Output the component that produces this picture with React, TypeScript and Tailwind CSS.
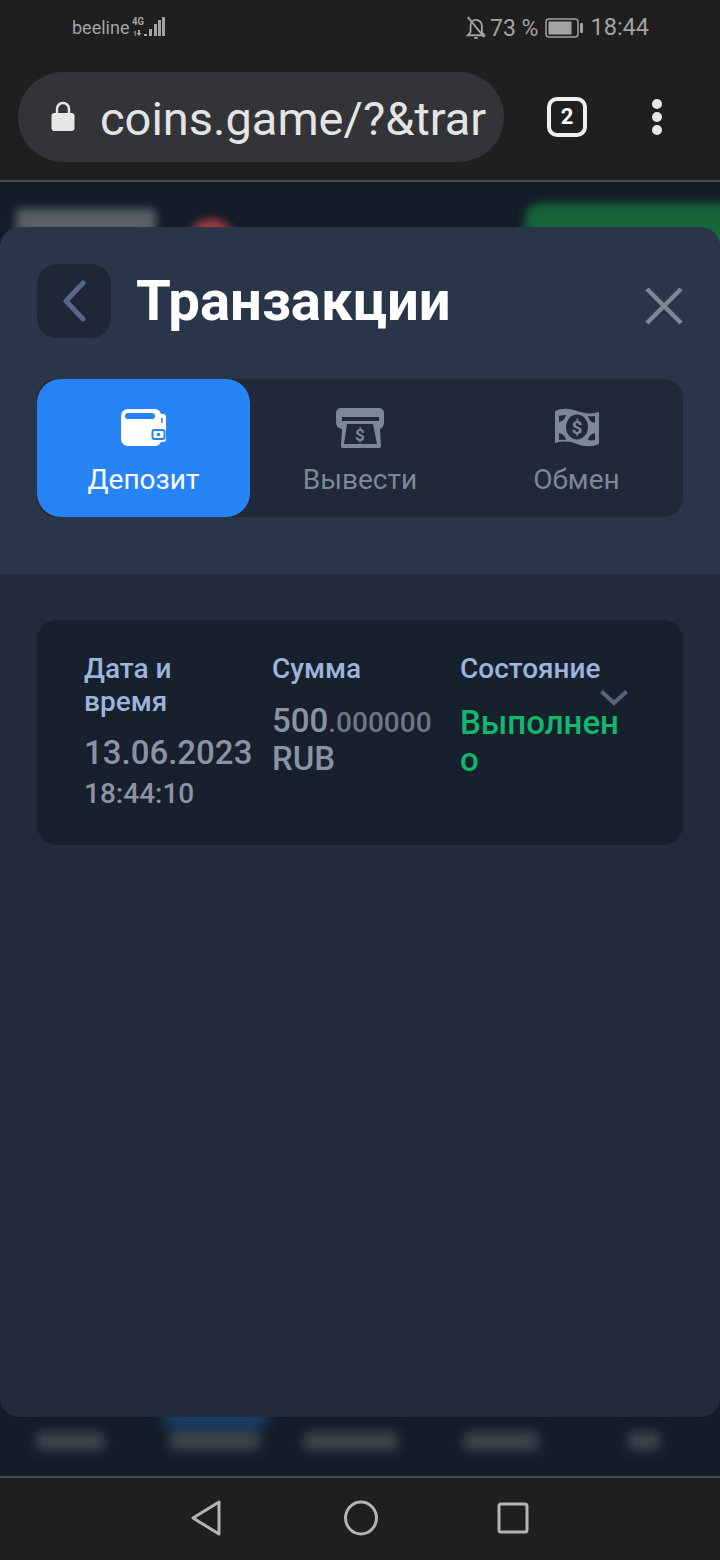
const SignalIcon = () => (
  <svg width="36" height="24" viewBox="0 0 36 24" className="text-[#a3a3a3]" fill="currentColor">
    <text x="0" y="9" fontSize="10" fontWeight="700" textLength="12" lengthAdjust="spacingAndGlyphs" fontFamily="Roboto, sans-serif">4G</text>
    <text x="1" y="20" fontSize="7" fontWeight="700" fontFamily="Roboto, sans-serif">1</text>
    <path d="M6 14h2v3h1.500L7 20l-2.500-3H6z" />
    <rect x="12" y="18" width="3" height="2" />
    <rect x="17" y="13" width="3" height="7" />
    <rect x="22" y="8" width="3" height="12" />
    <rect x="26" y="4" width="3" height="16" />
    <rect x="30" y="1" width="3" height="19" />
  </svg>
);

const BellOffIcon = () => (
  <svg width="20" height="24" viewBox="0 0 22 26" fill="none" stroke="#a3a3a3" strokeWidth="2">
    <path d="M2 21h18l-2.500-3.500V11c0-4-2.800-7-6.500-7S5 7 5 11v6.500L2 21z" />
    <path d="M9 24h4" />
    <path d="M2 1l18 22" />
  </svg>
);

const BatteryIcon = () => (
  <svg width="38" height="20" viewBox="0 0 38 20">
    <rect x="1" y="1" width="32" height="18" rx="3" fill="none" stroke="#a3a3a3" strokeWidth="1.500" />
    <rect x="3.500" y="3.500" width="23" height="13" fill="#a3a3a3" />
    <rect x="35" y="5" width="3" height="10" rx="1" fill="#a3a3a3" />
  </svg>
);

const LockIcon = () => (
  <svg width="26" height="32" viewBox="0 0 26 32">
    <path d="M7 14V8a6 6 0 0 1 12 0v6" fill="none" stroke="#e6e6e6" strokeWidth="2.500" />
    <rect x="1.500" y="12" width="23" height="18" rx="3" fill="#e6e6e6" />
  </svg>
);

const WalletIcon = () => (
  <svg width="46" height="38" viewBox="0 0 46 38">
    <path d="M7 0h26a7 7 0 0 1 7 5h2a3 3 0 0 1 3 3v22a3 3 0 0 1-3 3h-2a7 7 0 0 1-6 4H7a7 7 0 0 1-7-7V7a7 7 0 0 1 7-7z" fill="#fff" />
    <rect x="4" y="4" width="30" height="6" rx="3" fill="#2684f7" />
    <path d="M41 9v5" stroke="#2684f7" strokeWidth="1.500" />
    <rect x="31.500" y="21" width="12" height="9" rx="2" fill="#fff" stroke="#2684f7" strokeWidth="2" />
    <circle cx="37.500" cy="25.500" r="1.800" fill="#2684f7" />
  </svg>
);

const WithdrawIcon = () => (
  <svg width="50" height="40" viewBox="0 0 50 40">
    <path d="M6 0h38a5 5 0 0 1 5 5v10a7 7 0 0 1-4 6l1 17a2 2 0 0 1-2 2H8a2 2 0 0 1-2-2l1-17a7 7 0 0 1-6-6V5a5 5 0 0 1 5-5z" fill="#7d8896" />
    <rect x="7" y="9" width="37" height="4" fill="#1f2937" />
    <path d="M12 16h26l4 20H9z" fill="#1f2937" />
    <text x="25" y="33" textAnchor="middle" fontSize="17" fontWeight="700" fill="#7d8896" fontFamily="Roboto, sans-serif">$</text>
  </svg>
);

const CashIcon = () => (
  <svg width="46" height="40" viewBox="0 0 46 40">
    <path d="M1 3c6-3 14-3 22 0s15 3 22 1v32c-7 3-14 3-22 0s-15-3-22-1z" fill="#7d8896" />
    <ellipse cx="23" cy="19" rx="11" ry="12.500" fill="#1f2937" />
    <text x="23" y="26" textAnchor="middle" fontSize="19" fontWeight="700" fill="#7d8896" fontFamily="Roboto, sans-serif">$</text>
    <path d="M5 8c3-1 5-1 7-1-1 4-3 6-7 7zM41 8c-3 .5-5 .5-7 0 1 4 3 6 7 7zM5 25c4 1 6 3 7 7-2-.5-4-.5-7 0zM41 25c-4 1-6 3-7 7 2 .5 4 .5 7 0z" fill="#1f2937" />
  </svg>
);

export default function App() {
  return (
    <div className="w-[720px] h-[1560px] flex flex-col bg-[#1f1f1f] overflow-hidden font-['Roboto',sans-serif]">
      {/* status bar */}
      <div className="h-[58px] pb-[2px] flex items-center justify-between pl-[72px] pr-[71px] text-[#a3a3a3] shrink-0">
        <div className="flex items-center gap-[3px]">
          <span className="text-[18px] leading-none">beeline</span>
          <SignalIcon />
        </div>
        <div className="flex items-center text-[23.500px] leading-none">
          <BellOffIcon />
          <span className="ml-[4px] text-[23px]">73 %</span>
          <span className="mx-[7px]">
            <BatteryIcon />
          </span>
          <span>18:44</span>
        </div>
      </div>

      {/* browser bar */}
      <div className="h-[124px] flex items-start pl-[18px] shrink-0 border-b-2 border-[#4a4a4a]">
        <div className="mt-[14px] w-[486px] h-[90px] rounded-[45px] bg-[#333438] flex items-center pl-[32px] overflow-hidden">
          <LockIcon />
          <span className="ml-[24px] pt-[3px] text-[47px] leading-none text-[#e4e4e4] whitespace-nowrap">coins.game/?&amp;trar</span>
        </div>
        <div className="mt-[39px] ml-[43px] w-[40px] h-[40px] rounded-[10px] border-[4px] border-[#efefef] flex items-center justify-center text-[22px] font-bold text-white leading-none">2</div>
        <div className="mt-[41px] ml-[65px] flex flex-col gap-[3px]">
          <span className="w-[10px] h-[10px] rounded-full bg-[#e6e6e6]" />
          <span className="w-[10px] h-[10px] rounded-full bg-[#e6e6e6]" />
          <span className="w-[10px] h-[10px] rounded-full bg-[#e6e6e6]" />
        </div>
      </div>

      {/* page behind the modal */}
      <div className="relative flex-1 bg-[#131c28] overflow-hidden flex flex-col justify-between">
        <div className="flex items-start pt-[27px] pl-[16px] blur-[5px]">
          <div className="w-[140px] h-[26px] bg-[#5b6068] rounded-[4px]" />
          <div className="ml-[32px] mt-[10px] w-[46px] h-[46px] rounded-full bg-[#a83c42]" />
          <div className="ml-auto mt-[-6px] mr-[-20px] w-[215px] h-[80px] rounded-[16px] bg-[#166639]" />
        </div>
        <div className="relative flex items-start pl-[36px] pb-[26px] blur-[6px]">
          <div className="w-[68px] h-[18px] bg-[#41464e]" />
          <div className="ml-[66px] relative w-[90px] h-[18px] bg-[#41464e]">
            <div className="absolute left-[-6px] right-[-6px] top-[-22px] h-[16px] bg-[#1c4c82] blur-[6px]" />
          </div>
          <div className="ml-[44px] w-[94px] h-[18px] bg-[#41464e]" />
          <div className="ml-[66px] w-[74px] h-[18px] bg-[#41464e]" />
          <div className="ml-[90px] w-[32px] h-[18px] bg-[#41464e]" />
        </div>

        {/* modal */}
        <div className="absolute left-0 right-0 top-[45px] h-[1190px] rounded-[20px] bg-[#222b3a] overflow-hidden">
          <div className="h-[347px] bg-[#293649] px-[37px] pt-[37px]">
            <div className="flex items-start">
              <div className="w-[74px] h-[74px] rounded-[20px] bg-[#1e2735] flex items-center justify-center">
                <svg width="26" height="42" viewBox="0 0 26 42" fill="none" stroke="#56688a" strokeWidth="5" strokeLinecap="round" strokeLinejoin="round">
                  <path d="M22 3L5 21l17 18" />
                </svg>
              </div>
              <h1 className="ml-[25px] mt-[3px] text-[56.300px] leading-[68px] font-bold text-white">Транзакции</h1>
              <svg className="ml-auto mt-[23px]" width="38" height="38" viewBox="0 0 38 38" fill="none" stroke="#7d8896" strokeWidth="4.500">
                <path d="M2 2l34 34M36 2L2 36" />
              </svg>
            </div>

            <div className="mt-[41px] h-[138px] rounded-[20px] bg-[#1f2937] grid grid-cols-[213px_220px_213px]">
              <div className="rounded-[24px] bg-[#2684f7] flex flex-col items-center pt-[30px]">
                <WalletIcon />
                <span className="mt-[15px] text-[28px] leading-[36px] text-white">Депозит</span>
              </div>
              <div className="flex flex-col items-center pt-[29px]">
                <WithdrawIcon />
                <span className="mt-[14px] text-[28px] leading-[36px] text-[#7d8896]">Вывести</span>
              </div>
              <div className="flex flex-col items-center pt-[29px]">
                <CashIcon />
                <span className="mt-[14px] text-[28px] leading-[36px] text-[#7d8896]">Обмен</span>
              </div>
            </div>
          </div>

          <div className="px-[37px] pt-[46px]">
            <div className="relative h-[225px] rounded-[20px] bg-[#17202d] pl-[47px] pr-[35px] pt-[32px] grid grid-cols-3">
              <div className="min-w-0">
                <div className="text-[28px] leading-[33px] font-medium text-[#9db4dc] w-[120px]">Дата и время</div>
                <div className="mt-[15px] text-[33px] leading-[40px] font-medium text-[#8a94a2] whitespace-nowrap">13.06.2023</div>
                <div className="mt-[1px] text-[28px] leading-[40px] font-medium text-[#8a94a2]">18:44:10</div>
              </div>
              <div className="min-w-0">
                <div className="text-[28px] leading-[33px] font-medium text-[#9db4dc]">Сумма</div>
                <div className="mt-[18px] text-[33px] leading-[36px] font-medium text-[#8a94a2]">
                  500<span className="text-[28px] text-[#6d7785]">.000000</span> RUB
                </div>
              </div>
              <div className="min-w-0">
                <div className="text-[28px] leading-[33px] font-medium text-[#9db4dc]">Состояние</div>
                <div className="mt-[19px] w-[170px] text-[33px] leading-[37px] font-medium text-[#10b86e] break-words">Выполнено</div>
              </div>
              <svg className="absolute left-[563px] top-[70px]" width="28" height="16" viewBox="0 0 28 16" fill="none" stroke="#56657f" strokeWidth="4">
                <path d="M1.500 1.500L14 13 26.500 1.500" />
              </svg>
            </div>
          </div>
        </div>
      </div>

      {/* android nav */}
      <div className="h-[84px] shrink-0 border-t-2 border-[#4a4a4a] flex items-start justify-center pt-[22px]">
        <svg width="30" height="36" viewBox="0 0 30 36" fill="none" stroke="#b4b4b4" strokeWidth="3" strokeLinejoin="round" className="mr-[123px] -ml-[1px]">
          <path d="M28 2v32L2 18z" />
        </svg>
        <svg width="34" height="36" viewBox="0 0 34 36" fill="none" stroke="#b4b4b4" strokeWidth="3" className="mr-[119px]">
          <ellipse cx="17" cy="18" rx="15.500" ry="16" />
        </svg>
        <svg width="32" height="32" viewBox="0 0 32 32" fill="none" stroke="#b4b4b4" strokeWidth="3" strokeLinejoin="round" className="mt-[2px]">
          <rect x="2" y="2" width="28" height="28" rx="2" />
        </svg>
      </div>
    </div>
  );
}
